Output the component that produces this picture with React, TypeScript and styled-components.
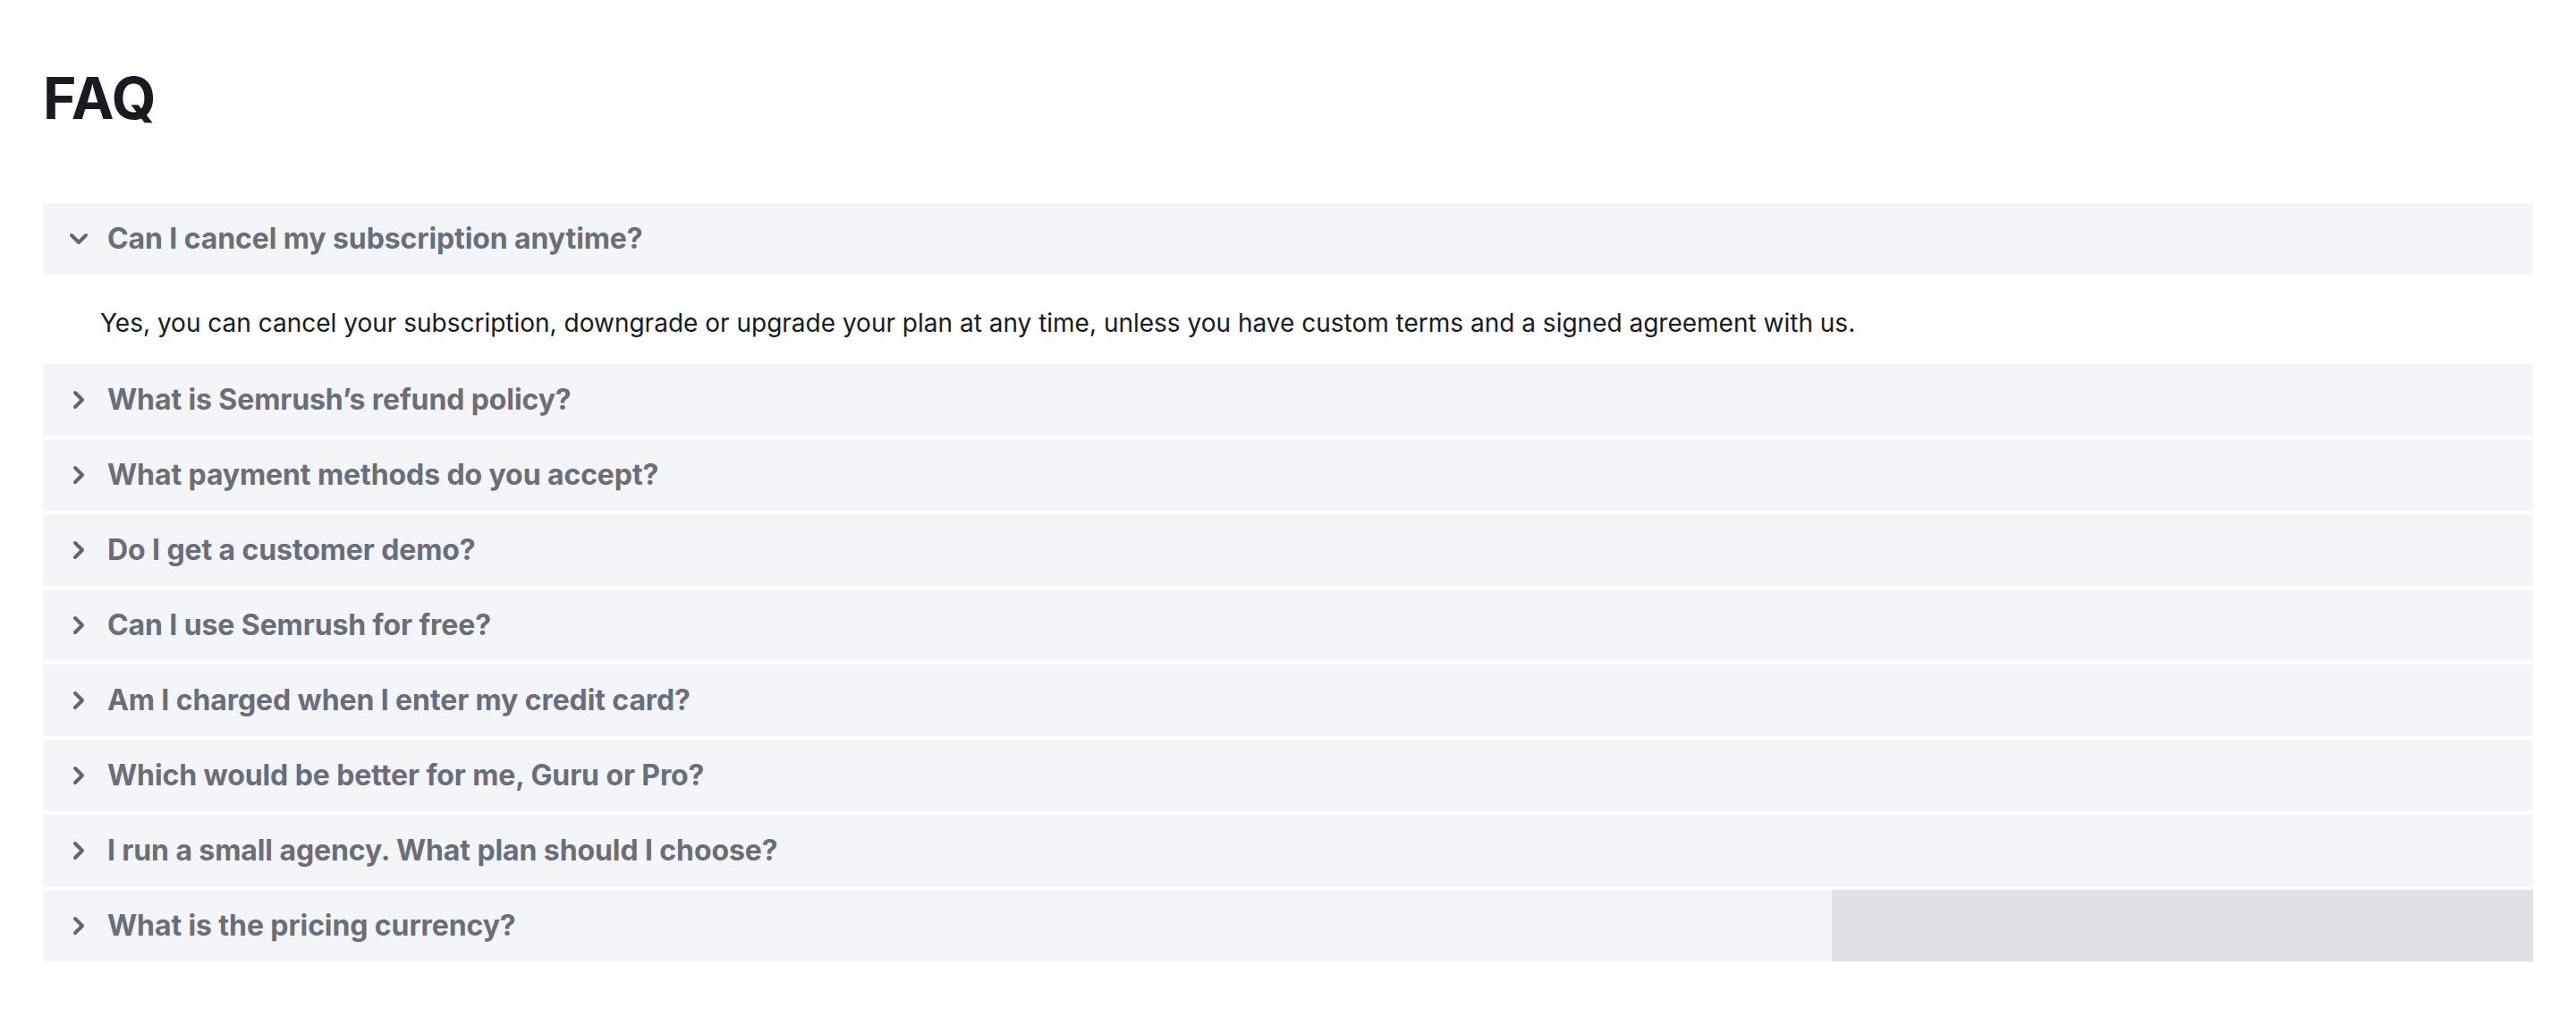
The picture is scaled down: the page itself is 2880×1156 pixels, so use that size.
import React, { useState } from 'react';
import styled, { createGlobalStyle } from 'styled-components';
import { ChevronDown, ChevronRight } from 'lucide-react';

const GlobalStyle = createGlobalStyle`
  * {
    box-sizing: border-box;
  }
  body {
    margin: 0;
    background: #fff;
    font-family: Inter, "Noto Sans", sans-serif;
  }
`;

const Page = styled.div`
  padding: 72px 48px 0;
`;

const Title = styled.h2`
  margin: 0 0 78px;
  font-size: 64px;
  line-height: 1.2;
  font-weight: 700;
  color: #191b23;
`;

const List = styled.div`
  display: flex;
  flex-direction: column;
  gap: 4px;
`;

const Item = styled.div`
  display: flex;
  flex-direction: column;
`;

const Header = styled.button<{ $shadeFrom?: number }>`
  display: flex;
  align-items: center;
  gap: 16px;
  height: 80px;
  padding: 0 24px;
  border: none;
  width: 100%;
  text-align: left;
  cursor: pointer;
  background: ${({ $shadeFrom }) =>
    $shadeFrom
      ? `linear-gradient(to right, #f4f5f9 0 ${$shadeFrom}px, #e0e1e6 ${$shadeFrom}px)`
      : '#f4f5f9'};
  color: #6b6d78;
  font-family: inherit;

  svg {
    flex-shrink: 0;
    color: #62646e;
  }
`;

const Question = styled.span`
  font-size: 32px;
  font-weight: 700;
  line-height: 40px;
  letter-spacing: -0.1px;
`;

const Answer = styled.div`
  padding: 34px 64px 22px;
  font-size: 28px;
  line-height: 40px;
  color: #171a22;
`;

const faqs = [
  {
    q: 'Can I cancel my subscription anytime?',
    a: 'Yes, you can cancel your subscription, downgrade or upgrade your plan at any time, unless you have custom terms and a signed agreement with us.',
  },
  { q: 'What is Semrush’s refund policy?', a: '' },
  { q: 'What payment methods do you accept?', a: '' },
  { q: 'Do I get a customer demo?', a: '' },
  { q: 'Can I use Semrush for free?', a: '' },
  { q: 'Am I charged when I enter my credit card?', a: '' },
  { q: 'Which would be better for me, Guru or Pro?', a: '' },
  { q: 'I run a small agency. What plan should I choose?', a: '' },
  { q: 'What is the pricing currency?', a: '' },
];

const App: React.FC = () => {
  const [open, setOpen] = useState(0);

  return (
    <Page>
      <GlobalStyle />
      <Title>FAQ</Title>
      <List>
        {faqs.map((item, index) => (
          <Item key={index}>
            <Header
              $shadeFrom={index === faqs.length - 1 ? 2000 : undefined}
              onClick={() => setOpen(open === index ? -1 : index)}
            >
              {open === index ? (
                <ChevronDown size={32} strokeWidth={3} />
              ) : (
                <ChevronRight size={32} strokeWidth={3} />
              )}
              <Question>{item.q}</Question>
            </Header>
            {open === index && <Answer>{item.a}</Answer>}
          </Item>
        ))}
      </List>
    </Page>
  );
};

export default App;
